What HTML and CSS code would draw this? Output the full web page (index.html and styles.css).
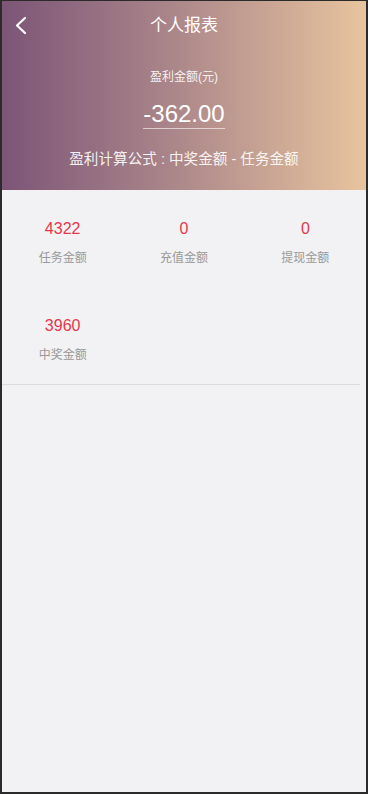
FILE: index.html
```html
<!DOCTYPE html>
<html lang="zh">
<head>
<meta charset="UTF-8">
<meta name="viewport" content="width=device-width, initial-scale=1.0">
<title>个人报表</title>
<link rel="stylesheet" href="styles.css">
</head>
<body>
<div class="page">

  <div class="top">
    <div class="nav">
      <a class="back" href="#">
        <svg width="14" height="20" viewBox="0 0 14 20"><polyline points="10,2 2,9.5 10,17" fill="none" stroke="#fff" stroke-width="2.2" stroke-linecap="round" stroke-linejoin="round"/></svg>
      </a>
      <div class="nav-title">个人报表</div>
    </div>

    <div class="profit">
      <div class="profit-label">盈利金额(元)</div>
      <div class="profit-amount"><span>-362.00</span></div>
      <div class="profit-formula">盈利计算公式 : 中奖金额 - 任务金额</div>
    </div>
  </div>

  <div class="stats">
    <div class="stat">
      <div class="stat-num">4322</div>
      <div class="stat-label">任务金额</div>
    </div>
    <div class="stat">
      <div class="stat-num">0</div>
      <div class="stat-label">充值金额</div>
    </div>
    <div class="stat">
      <div class="stat-num">0</div>
      <div class="stat-label">提现金额</div>
    </div>
    <div class="stat">
      <div class="stat-num">3960</div>
      <div class="stat-label">中奖金额</div>
    </div>
  </div>
  <div class="line"></div>

</div>
</body>
</html>
```

FILE: styles.css
```css
html, body {
  margin: 0;
  padding: 0;
}

body {
  background-color: #2b2b2b;
  font-family: "Liberation Sans", "Noto Sans CJK SC", sans-serif;
  padding: 1px 2px 2px 2px;
}

.page {
  background-color: #f2f2f4;
  min-height: 791px;
}

.top {
  background: linear-gradient(to right, #7c5577, #a98489 45%, #e8c49e);
  color: #fff;
}

.nav {
  height: 50px;
  position: relative;
  text-align: center;
}

.nav-title {
  line-height: 50px;
  font-size: 17px;
}

.back {
  position: absolute;
  left: 13px;
  top: 15px;
  display: block;
  width: 14px;
  height: 20px;
}

.profit {
  text-align: center;
  padding: 17px 0 21px;
}

.profit-label {
  font-size: 12px;
  line-height: 18px;
  color: rgba(255, 255, 255, 0.9);
}

.profit-amount {
  margin-top: 14px;
}

.profit-amount span {
  display: inline-block;
  font-size: 24px;
  line-height: 28px;
  border-bottom: 1px solid rgba(255, 255, 255, 0.6);
}

.profit-formula {
  margin-top: 20px;
  font-size: 14.6px;
  line-height: 20px;
  color: rgba(255, 255, 255, 0.92);
}

.stats {
  display: grid;
  grid-template-columns: 1fr 1fr 1fr;
}

.stat {
  text-align: center;
  padding: 27px 0 19px;
}

.stat-num {
  color: #e8364c;
  font-size: 16px;
  line-height: 24px;
}

.stat-label {
  margin-top: 7px;
  color: #999;
  font-size: 12px;
  line-height: 20px;
}

.line {
  height: 1px;
  background-color: #dcdcdf;
  margin-right: 6px;
}
```
